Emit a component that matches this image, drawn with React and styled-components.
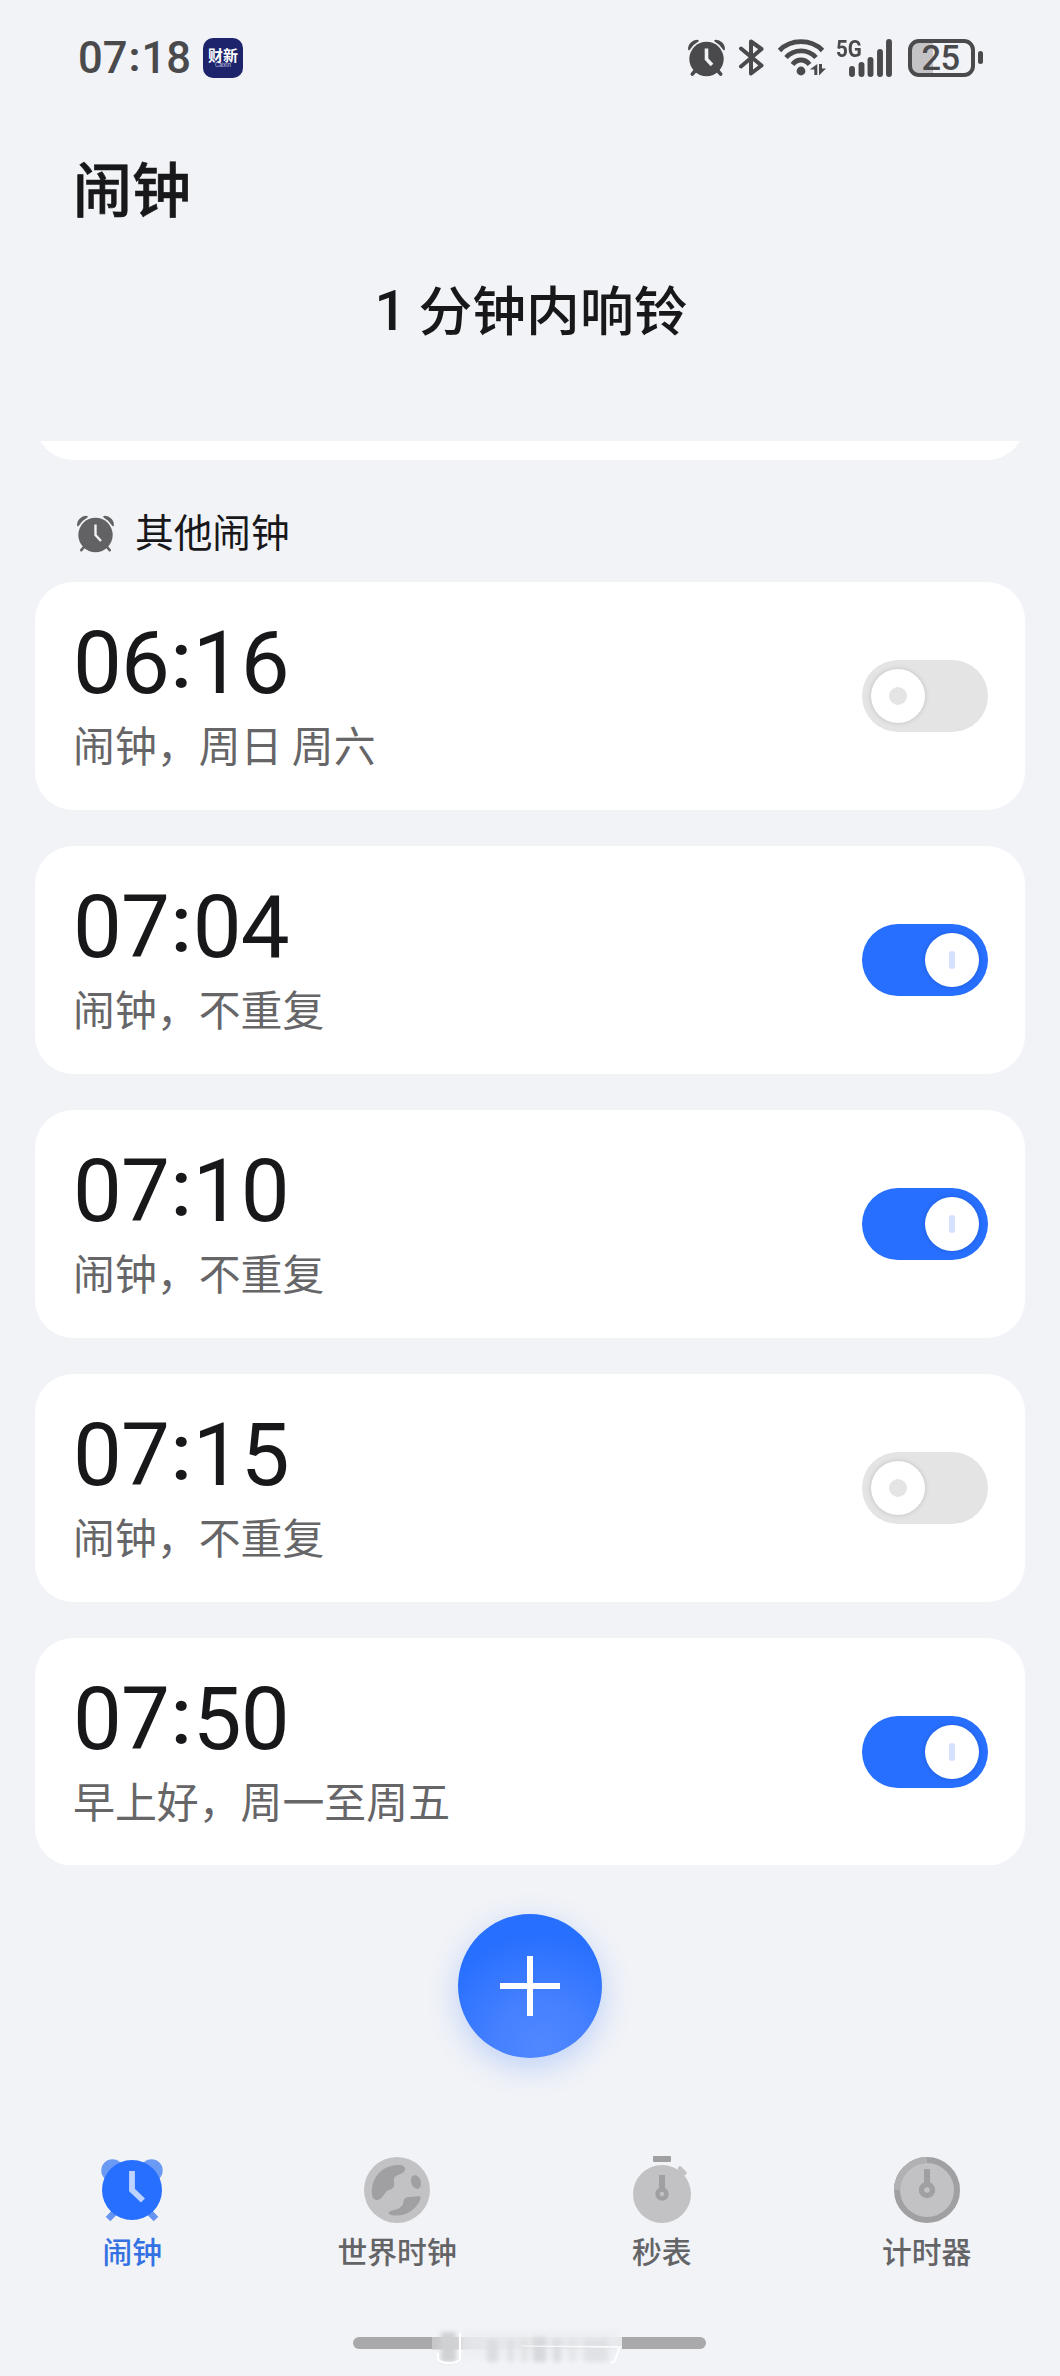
import React from "react";
import styled, { createGlobalStyle, css } from "styled-components";

const Global = createGlobalStyle`
  * { box-sizing: border-box; }
  body { margin: 0; background: #f1f3f7; }
`;

const cjk = `"Noto Sans CJK SC", sans-serif`;

const Screen = styled.div`
  width: 1060px;
  height: 2376px;
  overflow: hidden;
  background: #f1f3f7;
  display: flex;
  flex-direction: column;
  color: #18181a;
  font-family: ${cjk};
`;

const StatusBar = styled.header`
  height: 115px;
  padding: 0 77px 0 78px;
  display: flex;
  align-items: center;
  justify-content: space-between;
  color: #4a4a4c;
`;

const StatusGroup = styled.div`
  display: flex;
  align-items: center;
  gap: ${(p) => p.$gap || 0}px;
`;

const Digits = styled.div`
  display: flex;
  align-items: flex-end;
  font-family: Roboto, sans-serif;
  font-size: ${(p) => p.$size}px;
  font-weight: ${(p) => p.$weight || 400};
  letter-spacing: ${(p) => p.$tracking || 0}px;
  padding-top: ${(p) => p.$drop || 0}px;
  line-height: 1;
`;

const Colon = styled.span`
  width: ${(p) => p.$width}px;
  padding-bottom: ${(p) => p.$lift}px;
  font-size: ${(p) => p.$size}px;
  font-weight: ${(p) => p.$weight || 500};
  line-height: 1;
  text-align: center;
`;

const AppBadge = styled.div`
  width: 40px;
  height: 40px;
  border-radius: 10px;
  background: #1e246c;
  color: #fff;
  display: flex;
  flex-direction: column;
  align-items: center;
  justify-content: center;
`;

const BadgeName = styled.span`
  font: 700 15px/15px ${cjk};
`;

const BadgeCaption = styled.span`
  font: 400 5.5px/6px Inter, sans-serif;
  color: #c9cbe6;
`;

const Icon = styled.svg`
  display: block;
  flex: none;
  overflow: visible;
`;

const Title = styled.h1`
  margin: 0;
  padding: 39px 0 0 73px;
  height: 139px;
  font-size: 59px;
  font-weight: 500;
  line-height: 66px;
  -webkit-text-stroke: 0.6px currentColor;
`;

const NextRing = styled.p`
  margin: 0;
  height: 187px;
  padding: 21px 0 0 2px;
  display: flex;
  justify-content: center;
  gap: 21px;
  font-size: 53.8px;
  font-weight: 500;
  line-height: 66px;
`;

const NextRingCount = styled.span`
  width: 23px;
  padding-top: 3px;
  font-family: Roboto, sans-serif;
  font-size: 56px;
  font-weight: 500;
`;

const ListViewport = styled.main`
  height: 1424px;
  padding: 0 35px;
  overflow: hidden;
  display: flex;
  flex-direction: column;
`;

const ScrolledCard = styled.div`
  flex: none;
  height: 228px;
  margin-top: -209px;
  border-radius: 38px;
  background: #fff;
`;

const SectionHeader = styled.h2`
  flex: none;
  margin: 0;
  height: 122px;
  padding: 0 0 30px 42px;
  display: flex;
  align-items: flex-end;
  gap: 21px;
  font-size: 38.7px;
  font-weight: 400;
  line-height: 50px;
`;

const SectionLabel = styled.span`
  height: 47px;
`;

const AlarmList = styled.ul`
  list-style: none;
  margin: 0;
  padding: 0;
  display: flex;
  flex-direction: column;
  gap: 36px;
`;

const AlarmCard = styled.li`
  height: 228px;
  padding: 0 37px 0 38px;
  border-radius: 38px;
  background: #fff;
  display: flex;
  align-items: center;
  justify-content: space-between;
`;

const AlarmInfo = styled.div`
  padding-top: 3px;
  display: flex;
  flex-direction: column;
  gap: 6px;
`;

const AlarmNote = styled.div`
  font-size: 41.9px;
  line-height: 62px;
  color: #666668;
`;

const Switch = styled.button`
  width: 126px;
  height: 72px;
  padding: 0 9px;
  border: 0;
  border-radius: 36px;
  display: flex;
  align-items: center;
  justify-content: ${(p) => (p.$on ? "flex-end" : "flex-start")};
  background: ${(p) => (p.$on ? "#276fff" : "#e4e4e4")};
`;

const Knob = styled.span`
  width: 54px;
  height: 54px;
  border-radius: 50%;
  background: #fff;
  box-shadow: 0 0 5px rgba(0, 0, 0, 0.16);
  display: flex;
  align-items: center;
  justify-content: center;
  &::after {
    content: "";
    height: 18px;
    ${(p) =>
      p.$on
        ? css`width: 6px; border-radius: 3px; background: #d3e1ff;`
        : css`width: 18px; border-radius: 9px; background: #e4e4e4;`}
  }
`;

const AddRow = styled.div`
  height: 240px;
  padding-top: 49px;
  display: flex;
  justify-content: center;
  align-items: flex-start;
`;

const AddButton = styled.button`
  width: 144px;
  height: 144px;
  padding: 0;
  border: 0;
  border-radius: 50%;
  display: flex;
  align-items: center;
  justify-content: center;
  background: radial-gradient(circle at 58% 92%, #5088ff 0, #4580ff 30%, #276fff 72%);
  box-shadow: 0 9px 30px rgba(39, 111, 255, 0.25);
`;

const TabBar = styled.nav`
  height: 232px;
  padding: 52px 1px 0 0;
  display: grid;
  grid-template-columns: repeat(4, 1fr);
`;

const Tab = styled.div`
  display: flex;
  flex-direction: column;
  align-items: center;
  gap: 7px;
  font-size: 29.8px;
  font-weight: 500;
  line-height: 40px;
  color: ${(p) => (p.$active ? "#3471e3" : "#646466")};
`;

const HomeBar = styled.div`
  position: relative;
  width: 353px;
  height: 12px;
  margin-left: 353px;
  border-radius: 6px;
  background: #a9a9ab;
`;

const Smudge = styled.svg`
  position: absolute;
  left: 79px;
  top: -12px;
`;

function TimeText({ value }) {
  const [h, m] = value.split(":");
  return (
    <Digits $size={87} $tracking={-1}>
      {h}
      <Colon $width={24} $size={80} $lift={6}>:</Colon>
      {m}
    </Digits>
  );
}

function ClockGlyph({ size = 37, color = "#4a4a4c", hand = 3.6, foot = 3.6 }) {
  return (
    <Icon width={size} height={size} viewBox="0 0 37 37">
      <circle cx="18.5" cy="20" r="17.2" fill={color} />
      <path d="M.9 10.500A8.300 8.300 0 0 1 10 1.700Q4.600 4.600 .9 10.500ZM36.100 10.500A8.300 8.300 0 0 0 27 1.700Q32.400 4.600 36.100 10.500Z" fill={color} stroke={color} strokeWidth="1.600" strokeLinejoin="round" />
      <path d="M7 32 4.300 35.200M30 32l2.700 3.200" stroke={color} strokeWidth={foot} strokeLinecap="round" />
      <path d="M18.500 9.500v10.500l5.500 6" fill="none" stroke="#f1f3f7" strokeWidth={hand} />
    </Icon>
  );
}

function BluetoothIcon() {
  return (
    <Icon width="25" height="37" viewBox="0 0 25 37">
      <path d="M2 9.500 22.500 26.500 12 34.500V2.500L22.500 10 2 27.500" fill="none" stroke="#4a4a4c" strokeWidth="4" strokeLinejoin="round" strokeLinecap="round" />
    </Icon>
  );
}

function WifiIcon() {
  return (
    <Icon width="47" height="37" viewBox="0 0 47 37">
      <g fill="none" stroke="#4a4a4c" strokeWidth="4.800">
        <path d="M1.500 11.500Q10 2.700 23 2.700T44.500 11.500" />
        <path d="M8 18.500Q14 11.800 23 11.800T38 18.500" />
        <path d="M14.500 25.500Q18 21 23 21t8.500 4.500" />
      </g>
      <circle cx="23" cy="32" r="4.400" fill="#4a4a4c" />
      <path d="M39.300 25v11h-3v-5.500h-4.500zM41 25h3v4.500h4L41 36.500z" fill="#4a4a4c" />
    </Icon>
  );
}

const SignalWrap = styled.div`
  position: relative;
  width: 56px;
  height: 38px;
  margin-left: -3px;
`;

const SignalLabel = styled.span`
  position: absolute;
  left: 0;
  top: -1px;
  font: 700 24.5px/22px Roboto, sans-serif;
  transform: scaleX(0.84);
  transform-origin: left;
`;

const BatteryWrap = styled.div`
  display: flex;
  align-items: center;
  gap: 3px;
  margin-left: 2px;
`;

const Battery = styled.div`
  width: 67px;
  height: 38px;
  border: 4px solid #4a4a4c;
  border-radius: 11px;
  background: linear-gradient(90deg, #c3c3c6 35%, transparent 35%);
  font: 500 34.5px/31px Roboto, sans-serif;
  text-align: center;
  text-indent: -2px;
  letter-spacing: -0.5px;
`;

const BatteryTip = styled.span`
  width: 5px;
  height: 13px;
  border-radius: 3px;
  background: #4a4a4c;
`;

function AlarmTabIcon() {
  return (
    <Icon width="66" height="66" viewBox="0 0 66 66">
      <circle cx="13.500" cy="13.500" r="11.200" fill="#6b9af5" />
      <circle cx="52.500" cy="13.500" r="11.200" fill="#6b9af5" />
      <path d="m15 56-6 6M51 56l6 6" stroke="#6794f0" strokeWidth="6.500" />
      <circle cx="33" cy="33" r="30" fill="#276fff" />
      <path d="M33 14v19L44 43.500" fill="none" stroke="#bdd3ff" strokeWidth="5.800" />
    </Icon>
  );
}

function WorldTabIcon() {
  return (
    <Icon width="66" height="66" viewBox="0 0 66 66">
      <circle cx="33" cy="33" r="33" fill="#c2c2c5" />
      <g fill="#a0a0a2">
        <path d="M8 37C7 23 15 9 34 8c5 0 8 2 7 5s-5 4-9 6c-4 3-1 6-2 10s-5 3-8 6c-3 4-6 9-10 8-3-1-4-3-4-6Z" />
        <ellipse cx="52" cy="25" rx="4.800" ry="7" transform="rotate(-18 52 25)" />
        <path d="M25 55c5-3 11-2 14-8 1-4 1-7 6-7s8-1 11-1c2 3-3 11-9 15-7 5-15 5-20 4-2-1-3-2-2-3Z" />
      </g>
    </Icon>
  );
}

function StopwatchTabIcon() {
  return (
    <Icon width="66" height="66" viewBox="0 0 66 66">
      <rect x="24" y="-1" width="18" height="6" rx="1" fill="#a0a0a2" />
      <circle cx="33" cy="37" r="29" fill="#c2c2c5" />
      <path d="m47 19 5-5" stroke="#c2c2c5" strokeWidth="6" />
      <path d="m51 11.500 4.500 4.500" stroke="#c2c2c5" strokeWidth="4.500" strokeLinecap="round" />
      <path d="M33 18v16" stroke="#a0a0a2" strokeWidth="6" />
      <circle cx="33" cy="37" r="4.500" fill="#c2c2c5" stroke="#a0a0a2" strokeWidth="4.500" />
    </Icon>
  );
}

function TimerTabIcon() {
  return (
    <Icon width="66" height="66" viewBox="0 0 66 66">
      <circle cx="33" cy="33" r="30" fill="#c2c2c5" stroke="#a0a0a2" strokeWidth="6" />
      <path d="M3 33A30 30 0 0 1 33 3" fill="none" stroke="#b1b1b4" strokeWidth="6" />
      <path d="M33 12v15" stroke="#a0a0a2" strokeWidth="6" />
      <circle cx="33" cy="33" r="5.500" fill="#c2c2c5" stroke="#a0a0a2" strokeWidth="5.500" />
    </Icon>
  );
}

function HomeBarSmudge() {
  return (
    <Smudge width="192" height="44" viewBox="0 0 192 44">
      <defs>
        <linearGradient id="fade" x1="0" x2="1" y1="0" y2="0">
          <stop offset="0" stopColor="#c6c6c9" />
          <stop offset=".3" stopColor="#e0e1e4" />
          <stop offset="1" stopColor="#e6e7ea" />
        </linearGradient>
        <filter id="soft" x="-20%" y="-20%" width="140%" height="140%">
          <feGaussianBlur stdDeviation="2" />
        </filter>
      </defs>
      <rect y="12" width="190" height="12.500" fill="url(#fade)" />
      <rect x="30" y="5" width="156" height="30" fill="#ecedf0" opacity=".6" filter="url(#soft)" />
      <g fill="#dcdde0" filter="url(#soft)">
        <rect x="9" y="7" width="15" height="30" fill="#d0d1d3" />
        <rect x="55" y="14" width="11" height="23" />
        <rect x="75" y="14" width="7" height="23" opacity=".7" />
        <rect x="89" y="14" width="7" height="23" opacity=".6" />
        <rect x="101" y="12" width="13" height="25" fill="#d8d9dc" />
        <rect x="121" y="14" width="8" height="23" />
        <rect x="137" y="14" width="7" height="23" opacity=".5" />
        <rect x="152" y="14" width="24" height="23" opacity=".7" />
      </g>
      <path d="M90 20.500 190 21l-2 4-4-2-94-1.500z" fill="#f8f9fb" />
      <path d="M6 28v6q2 4 11 4t11-4V8M187 24l-4 11q-1 3-4 2" fill="none" stroke="#fff" strokeWidth="2" />
    </Smudge>
  );
}

const alarms = [
  { time: "06:16", note: "闹钟，周日 周六", on: false },
  { time: "07:04", note: "闹钟，不重复", on: true },
  { time: "07:10", note: "闹钟，不重复", on: true },
  { time: "07:15", note: "闹钟，不重复", on: false },
  { time: "07:50", note: "早上好，周一至周五", on: true },
];

const tabs = [
  { label: "闹钟", icon: AlarmTabIcon, active: true },
  { label: "世界时钟", icon: WorldTabIcon },
  { label: "秒表", icon: StopwatchTabIcon },
  { label: "计时器", icon: TimerTabIcon },
];

export default function App() {
  return (
    <Screen>
      <Global />
      <StatusBar>
        <StatusGroup $gap={12}>
          <Digits $size={43.5} $weight={500} $drop={2}>
            07<Colon $width={14} $size={41} $lift={3} $weight={700}>:</Colon>18
          </Digits>
          <AppBadge>
            <BadgeName>财新</BadgeName>
            <BadgeCaption>Caixin</BadgeCaption>
          </AppBadge>
        </StatusGroup>
        <StatusGroup $gap={14}>
          <ClockGlyph />
          <BluetoothIcon />
          <WifiIcon />
          <SignalWrap>
            <SignalLabel>5G</SignalLabel>
            <Icon width="56" height="38" viewBox="0 0 56 38">
              <path d="M16 30v5M25.500 26v9M34.500 21v14M44 13v22M53 3v32" stroke="#4a4a4c" strokeWidth="5.900" strokeLinecap="round" />
            </Icon>
          </SignalWrap>
          <BatteryWrap>
            <Battery>25</Battery>
            <BatteryTip />
          </BatteryWrap>
        </StatusGroup>
      </StatusBar>
      <Title>闹钟</Title>
      <NextRing>
        <NextRingCount>1</NextRingCount>
        <span>分钟内响铃</span>
      </NextRing>
      <ListViewport>
        <ScrolledCard />
        <SectionHeader>
          <ClockGlyph color="#626264" hand={2.4} foot={2.6} />
          <SectionLabel>其他闹钟</SectionLabel>
        </SectionHeader>
        <AlarmList>
          {alarms.map((a) => (
            <AlarmCard key={a.time}>
              <AlarmInfo>
                <TimeText value={a.time} />
                <AlarmNote>{a.note}</AlarmNote>
              </AlarmInfo>
              <Switch $on={a.on} role="switch" aria-checked={a.on}>
                <Knob $on={a.on} />
              </Switch>
            </AlarmCard>
          ))}
        </AlarmList>
      </ListViewport>
      <AddRow>
        <AddButton>
          <Icon width="60" height="60" viewBox="0 0 60 60">
            <path d="M30 0v60M0 30h60" stroke="#fff" strokeWidth="6" />
          </Icon>
        </AddButton>
      </AddRow>
      <TabBar>
        {tabs.map(({ label, icon: TabIcon, active }) => (
          <Tab key={label} $active={active}>
            <TabIcon />
            {label}
          </Tab>
        ))}
      </TabBar>
      <HomeBar>
        <HomeBarSmudge />
      </HomeBar>
    </Screen>
  );
}
